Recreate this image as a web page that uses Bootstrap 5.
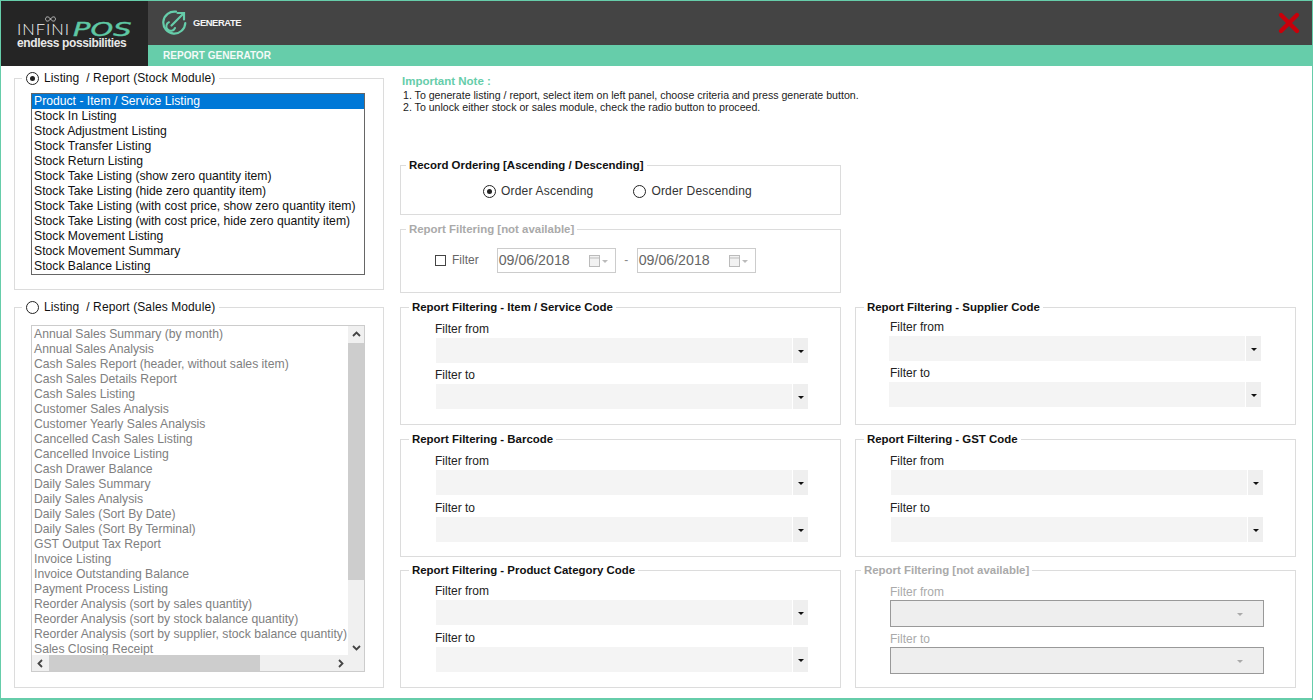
<!DOCTYPE html>
<html lang="en"><head><meta charset="utf-8"><title>Report Generator</title>
<link href="https://cdn.jsdelivr.net/npm/bootstrap@5.3.0/dist/css/bootstrap.min.css" rel="stylesheet">
<style>
html,body{height:100%;overflow:hidden}
body{font-family:"Liberation Sans",Arial,sans-serif;font-size:12px;color:#111;background:#fff;line-height:15px}
.frame{width:1313px;height:700px;border:1px solid #66cdaa;border-width:1px 1px 2px 1px;overflow:hidden;display:flex;flex-direction:column}
.head-bar{height:65px;flex:none}
.brand{width:147px;background:#252525;color:#fff;position:relative;flex:none}
.brand-inf-ico{position:absolute;left:44px;top:15px}
.brand-box{padding:20px 0 0 16px}
.brand-row{height:16px;white-space:nowrap}
.brand-inf{font-family:Lato,"Liberation Sans",sans-serif;font-size:16.5px;font-weight:300;letter-spacing:1px;line-height:15px;color:#f6f6f6}
.brand-pos{display:inline-block;width:59px;margin-left:3px;font-family:"DejaVu Sans",sans-serif;font-size:19px;font-style:italic;font-weight:400;color:#5ec8a4;line-height:15px;transform:scaleX(1.52);transform-origin:left center;-webkit-text-stroke:.4px #5ec8a4}
.brand-sub{display:block;font-size:12px;font-weight:700;letter-spacing:-.38px;color:#e8e8e8;line-height:12px;margin-top:0}
.tool-top{height:44px;background:#444;padding-left:13px}
.tool-label{font-size:9.4px;font-weight:700;letter-spacing:-.4px;color:#f4f4f4;margin-left:6px;margin-bottom:1px}
.tool-strip{height:21px;background:#66cdaa;color:#f3faf7;font-size:10.05px;font-weight:700;padding-left:15px;line-height:22px}
.close-ico{margin:0 11px 0 0}
.work{padding:5px 15px 0 13px;display:flex;gap:16px;flex:1}
.left-col{width:370px;flex:none;display:flex;flex-direction:column;gap:10px}
.right-col{width:896px;flex:none;display:flex;flex-direction:column}
.grp{border:1px solid #dcdcdc;margin:0;padding:0;position:relative;min-width:0}
.grp>legend{float:none;width:auto;margin:0 0 0 8px;padding:0 3px;font-size:11.45px;line-height:14px;font-weight:700;color:#111}
.grp>legend.near{margin-left:5px}
.grp.off>legend{color:#aaa}
.grp>legend.lg-radio{font-weight:400;font-size:12px;margin-left:7px;padding:0 4px;line-height:15px;display:flex;align-items:center;gap:5px;letter-spacing:.1px}
.grp-stock{height:219px;padding-top:7px}
.grp-sales{height:388px;padding-top:10px}
.rd{width:13px;height:13px;border:1px solid #222;border-radius:50%;display:inline-flex;align-items:center;justify-content:center;flex:none;background:#fff}
.rd.on::after{content:"";width:5px;height:5px;background:#222;border-radius:50%}
.pick{border:1px solid #666;height:182px;overflow:hidden;padding:0;margin:0 18px 0 16px;list-style:none;background:#fff}
.pick li{height:15px;line-height:15px;padding-left:2px;white-space:nowrap;font-size:12.2px}
.pick li.sel{background:#0078d7;color:#fff}
.pick-off{border:1px solid #ccc;color:#808080;height:347px;position:relative}
.rows{height:329px;overflow:hidden;width:316px;padding-top:1px}
.sb-v{position:absolute;right:0;top:0;bottom:16px;width:16px;background:#f0f0f0;display:flex;flex-direction:column;align-items:center}
.sb-h{position:absolute;left:0;right:16px;bottom:0;height:16px;background:#f0f0f0;display:flex;align-items:center}
.sb-corner{position:absolute;right:0;bottom:0;width:16px;height:16px;background:#f0f0f0}
.sb-btn{width:15px;height:15px;flex:none;display:flex;align-items:center;justify-content:center}
.sb-thumb-v{width:16px;height:237px;background:#cdcdcd;flex:none;margin-top:2px}
.sb-gap{flex:1}
.sb-thumb-h{height:16px;width:211px;background:#cdcdcd;flex:none;margin-left:2px}
.note{height:87px;padding:3px 0 0 3px;font-size:10.6px;line-height:12px;color:#222}
.note-h{font-size:11.5px;font-weight:700;color:#66cdaa;line-height:14px;margin-left:-1px;margin-bottom:1px}
.grp-w{width:441px}
.grp-order{height:57px;margin-bottom:7px}
.grp-order .inner{padding-top:12px;gap:40px;padding-left:82px}
.radio-lab{display:flex;align-items:center;gap:5px;color:#333;letter-spacing:.2px}
.grp-date{height:71px;margin-bottom:7px;color:#777}
.grp-date .inner{padding:12px 0 0 34px;align-items:center}
.chk{width:11px;height:11px;border:1px solid #444;margin-right:6px;background:#fff;flex:none}
.date{width:119px;height:25px;border:1px solid #ccc;font-size:14.2px;color:#666;padding-left:1px;display:flex;align-items:center;justify-content:space-between;padding-right:6px;line-height:1}
.fil-lab{color:#666;margin-right:18px}
.date-sep{width:21px;text-align:center;color:#888}
.filters{display:grid;grid-template-columns:441px 441px;column-gap:14px;row-gap:7px}
.grp-f{height:125px}
.grp-f3{margin-top:-1px}
.fl{padding:8px 0 0 34px;height:100%}
.fl-sup{padding-top:6px}
.fl-cat{padding-top:7px}
.lbl{display:block;line-height:15px;height:15px;color:#222}
.combo{width:372px;height:25px;background:#f4f4f4;display:flex;justify-content:flex-end;margin:1px 0 5px 1px}
.wide .combo{margin-bottom:6px}
.combo .arr{width:16px;height:25px;background:#efefef;border-left:1px solid #fff;display:flex;align-items:center;justify-content:center}
.combo .arr::after,.combo-off::after{content:"";border-left:3px solid transparent;border-right:3px solid transparent;border-top:3px solid #111;margin-top:1px}
.fl-sup .combo{margin-left:-1px}
.fl-gst .combo{margin-left:1px}
.combo-off{width:374px;height:27px;background:#eee;border:1px solid #999;margin:0 0 5px 0;display:flex;justify-content:flex-end;align-items:center;padding-right:20px}
.combo-off::after{border-top-color:#aaa}
.off .lbl{color:#aaa}
</style></head><body>
<div class="frame">
 <header class="head-bar d-flex">
  <div class="brand">
   <svg class="brand-inf-ico" width="11" height="6" viewBox="0 0 14 7" fill="none" stroke="#ddd" stroke-width="1"><path d="M7 3.500C5.500 1.200 4 .8 3 .8 1.600.8.7 2 .7 3.500S1.600 6.200 3 6.200C4 6.200 5.500 5.800 7 3.500 8.500 1.200 10 .8 11 .8 12.400.8 13.300 2 13.300 3.500S12.400 6.200 11 6.200C10 6.200 8.500 5.800 7 3.500Z"/></svg>
   <div class="brand-box">
    <div class="brand-row d-flex align-items-center"><span class="brand-inf">INFINI</span><span class="brand-pos">POS</span></div>
    <span class="brand-sub">endless possibilities</span>
   </div>
  </div>
  <div class="flex-grow-1 d-flex flex-column">
   <div class="tool-top d-flex align-items-center">
    <svg width="26" height="26" viewBox="0 0 26 26" fill="none" stroke="#66cdaa" stroke-width="2.200" stroke-linecap="round"><path d="M15 1.700A11 11 0 1 0 24.300 13"/><path d="M8 12.200A4.500 4.500 0 1 0 14 18" stroke-width="2"/><path d="M10.500 15.500 22.500 3.500"/><path d="M16.500 3H23V9.500"/></svg>
    <span class="tool-label">GENERATE</span>
    <svg class="close-ico ms-auto" width="24" height="24" viewBox="0 0 24 24" stroke="#c8000a" stroke-width="4.400" stroke-linecap="round"><path d="M4 4 20 20M20 4 4 20"/></svg>
   </div>
   <div class="tool-strip">REPORT GENERATOR</div>
  </div>
 </header>
 <main class="work">
  <div class="left-col">
   <fieldset class="grp grp-stock">
    <legend class="lg-radio"><span class="rd on"></span><span>Listing &nbsp;/ Report (Stock Module)</span></legend>
    <ul class="pick">
     <li class="sel">Product - Item / Service Listing</li><li>Stock In Listing</li><li>Stock Adjustment Listing</li><li>Stock Transfer Listing</li><li>Stock Return Listing</li><li>Stock Take Listing (show zero quantity item)</li><li>Stock Take Listing (hide zero quantity item)</li><li>Stock Take Listing (with cost price, show zero quantity item)</li><li>Stock Take Listing (with cost price, hide zero quantity item)</li><li>Stock Movement Listing</li><li>Stock Movement Summary</li><li>Stock Balance Listing</li>
    </ul>
   </fieldset>
   <fieldset class="grp grp-sales">
    <legend class="lg-radio"><span class="rd"></span><span>Listing &nbsp;/ Report (Sales Module)</span></legend>
    <div class="pick pick-off">
     <ul class="rows list-unstyled m-0">
      <li>Annual Sales Summary (by month)</li><li>Annual Sales Analysis</li><li>Cash Sales Report (header, without sales item)</li><li>Cash Sales Details Report</li><li>Cash Sales Listing</li><li>Customer Sales Analysis</li><li>Customer Yearly Sales Analysis</li><li>Cancelled Cash Sales Listing</li><li>Cancelled Invoice Listing</li><li>Cash Drawer Balance</li><li>Daily Sales Summary</li><li>Daily Sales Analysis</li><li>Daily Sales (Sort By Date)</li><li>Daily Sales (Sort By Terminal)</li><li>GST Output Tax Report</li><li>Invoice Listing</li><li>Invoice Outstanding Balance</li><li>Payment Process Listing</li><li>Reorder Analysis (sort by sales quantity)</li><li>Reorder Analysis (sort by stock balance quantity)</li><li>Reorder Analysis (sort by supplier, stock balance quantity)</li><li>Sales Closing Receipt</li>
     </ul>
     <div class="sb-v">
      <span class="sb-btn"><svg width="9" height="6" viewBox="0 0 9 6" fill="none" stroke="#444" stroke-width="1.800"><path d="M1 5 4.500 1.500 8 5"/></svg></span>
      <span class="sb-thumb-v"></span><span class="sb-gap"></span>
      <span class="sb-btn"><svg width="9" height="6" viewBox="0 0 9 6" fill="none" stroke="#444" stroke-width="1.800"><path d="M1 1 4.500 4.500 8 1"/></svg></span>
     </div>
     <div class="sb-h">
      <span class="sb-btn"><svg width="6" height="9" viewBox="0 0 6 9" fill="none" stroke="#444" stroke-width="1.800"><path d="M5 1 1.500 4.500 5 8"/></svg></span>
      <span class="sb-thumb-h"></span><span class="sb-gap"></span>
      <span class="sb-btn"><svg width="6" height="9" viewBox="0 0 6 9" fill="none" stroke="#444" stroke-width="1.800"><path d="M1 1 4.500 4.500 1 8"/></svg></span>
     </div>
     <div class="sb-corner"></div>
    </div>
   </fieldset>
  </div>
  <div class="right-col">
   <div class="note">
    <div class="note-h">Important Note :</div>
    <div>1. To generate listing / report, select item on left panel, choose criteria and press generate button.</div>
    <div>2. To unlock either stock or sales module, check the radio button to proceed.</div>
   </div>
   <fieldset class="grp grp-w grp-order">
    <legend class="near">Record Ordering [Ascending / Descending]</legend>
    <div class="inner d-flex">
     <span class="radio-lab"><span class="rd on"></span>Order Ascending</span>
     <span class="radio-lab"><span class="rd"></span>Order Descending</span>
    </div>
   </fieldset>
   <fieldset class="grp grp-w grp-date off">
    <legend class="near">Report Filtering [not available]</legend>
    <div class="inner d-flex">
     <span class="chk"></span><span class="fil-lab">Filter</span>
     <span class="date">09/06/2018<svg width="20" height="12" viewBox="0 0 20 12"><rect x=".5" y=".5" width="10" height="11" fill="#f2f2f2" stroke="#bbb"/><path d="M.5 3h10" stroke="#bbb"/><path d="M13 5h6l-3 3z" fill="#bbb"/></svg></span>
     <span class="date-sep">-</span>
     <span class="date">09/06/2018<svg width="20" height="12" viewBox="0 0 20 12"><rect x=".5" y=".5" width="10" height="11" fill="#f2f2f2" stroke="#bbb"/><path d="M.5 3h10" stroke="#bbb"/><path d="M13 5h6l-3 3z" fill="#bbb"/></svg></span>
    </div>
   </fieldset>
   <div class="filters">
    <fieldset class="grp grp-f"><legend>Report Filtering - Item / Service Code</legend><div class="fl"><span class="lbl">Filter from</span><div class="combo"><span class="arr"></span></div><span class="lbl">Filter to</span><div class="combo"><span class="arr"></span></div></div></fieldset>
    <fieldset class="grp grp-f"><legend>Report Filtering - Supplier Code</legend><div class="fl fl-sup"><span class="lbl">Filter from</span><div class="combo"><span class="arr"></span></div><span class="lbl">Filter to</span><div class="combo"><span class="arr"></span></div></div></fieldset>
    <fieldset class="grp grp-f"><legend>Report Filtering - Barcode</legend><div class="fl wide"><span class="lbl">Filter from</span><div class="combo"><span class="arr"></span></div><span class="lbl">Filter to</span><div class="combo"><span class="arr"></span></div></div></fieldset>
    <fieldset class="grp grp-f"><legend>Report Filtering - GST Code</legend><div class="fl fl-gst wide"><span class="lbl">Filter from</span><div class="combo"><span class="arr"></span></div><span class="lbl">Filter to</span><div class="combo"><span class="arr"></span></div></div></fieldset>
    <fieldset class="grp grp-f grp-f3"><legend>Report Filtering - Product Category Code</legend><div class="fl fl-cat wide"><span class="lbl">Filter from</span><div class="combo"><span class="arr"></span></div><span class="lbl">Filter to</span><div class="combo"><span class="arr"></span></div></div></fieldset>
    <fieldset class="grp grp-f grp-f3 off"><legend class="near">Report Filtering [not available]</legend><div class="fl"><span class="lbl">Filter from</span><div class="combo-off"></div><span class="lbl">Filter to</span><div class="combo-off"></div></div></fieldset>
   </div>
  </div>
 </main>
</div>
<script src="https://cdn.jsdelivr.net/npm/bootstrap@5.3.0/dist/js/bootstrap.bundle.min.js"></script>
</body></html>
